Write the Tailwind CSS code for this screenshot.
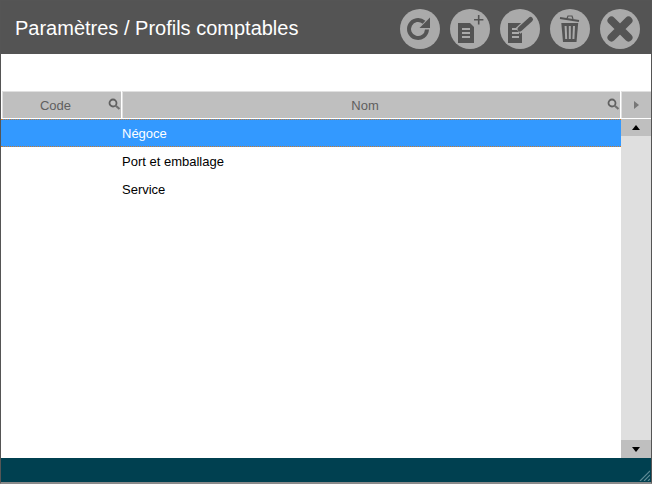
<!DOCTYPE html>
<html lang="fr">
<head>
<meta charset="UTF-8">
<title>Paramètres / Profils comptables</title>
<script src="https://cdn.jsdelivr.net/npm/@tailwindcss/browser@4"></script>
</head>
<body class="bg-white">
<div class="relative w-[652px] h-[484px] flex flex-col border border-[#555] border-b-2 border-b-[#8a8a8a] font-['Liberation_Sans',sans-serif] overflow-hidden">
    <!-- title bar -->
    <div class="h-[53px] shrink-0 bg-[#545454] flex items-center justify-between pl-[14px] pr-[11px]">
        <h1 class="text-[20px] text-white">Paramètres / Profils comptables</h1>
        <div class="flex gap-[10px] mt-[2px]">
            <svg class="w-10 h-10" viewBox="0 0 40 40">
                <circle cx="20" cy="20" r="20" fill="#aaa"/>
                <path d="M27 20.500a9 9 0 1 1-3-7.200" fill="none" stroke="#545454" stroke-width="4"/>
                <path d="M30 8.500v10.500h-10.500z" fill="#545454"/>
            </svg>
            <svg class="w-10 h-10" viewBox="0 0 40 40">
                <circle cx="20" cy="20" r="20" fill="#aaa"/>
                <path d="M8 14h12l4 4v16H8z" fill="#545454"/>
                <path d="M12 20h8M12 24h8M12 28h8" stroke="#aaa" stroke-width="1.800"/>
                <path d="M28.700 6v9.400M24 10.700h9.400" stroke="#545454" stroke-width="1.600"/>
            </svg>
            <svg class="w-10 h-10" viewBox="0 0 40 40">
                <circle cx="20" cy="20" r="20" fill="#aaa"/>
                <path d="M8 14h14v20H8z" fill="#545454"/>
                <path d="M12 20h7M12 24h7M12 28h7" stroke="#aaa" stroke-width="1.800"/>
                <path d="M18 22l12-11" stroke="#aaa" stroke-width="7.500"/>
                <path d="M20 20l10.500-9.500" stroke="#545454" stroke-width="5" stroke-linecap="round"/>
            </svg>
            <svg class="w-10 h-10" viewBox="0 0 40 40">
                <circle cx="20" cy="20" r="20" fill="#aaa"/>
                <path d="M10 9l19 3" stroke="#545454" stroke-width="2"/>
                <path d="M17 9.500l1-2.500h4l1 3" fill="none" stroke="#545454" stroke-width="1.200"/>
                <path d="M11.300 14h16.900l-1.700 19h-13.500z" fill="#545454"/>
                <path d="M15.600 17l.6 13M19.800 17v13M24 17l-.6 13" stroke="#aaa" stroke-width="2"/>
            </svg>
            <svg class="w-10 h-10" viewBox="0 0 40 40">
                <circle cx="20" cy="20" r="20" fill="#aaa"/>
                <path d="M11.500 11.500l17 17M28.500 11.500l-17 17" stroke="#545454" stroke-width="8" stroke-linecap="round"/>
            </svg>
        </div>
    </div>
    <div class="h-[37px] shrink-0"></div>
    <!-- column headers -->
    <div class="h-[27px] shrink-0 flex gap-[1px] text-[13px] text-[#606060] bg-white">
        <div class="relative w-[119px] ml-px border-t border-l border-[#e0e0e0] bg-[#bfbfbf] flex items-center justify-center pr-[13px] pt-[2px]">
            Code
            <svg class="absolute right-0 top-[5px] w-[14px] h-[14px]" viewBox="0 0 14 14"><circle cx="6" cy="6" r="3.500" fill="#c4c4c4" stroke="#606060" stroke-width="1.800"/><path d="M8.500 8.500l4 3.500" stroke="#707070" stroke-width="2.200"/></svg>
        </div>
        <div class="relative w-[498px] border-t border-l border-[#e0e0e0] bg-[#bfbfbf] flex items-center justify-center pr-[13px] pt-[2px]">
            Nom
            <svg class="absolute right-0 top-[5px] w-[14px] h-[14px]" viewBox="0 0 14 14"><circle cx="6" cy="6" r="3.500" fill="#c4c4c4" stroke="#606060" stroke-width="1.800"/><path d="M8.500 8.500l4 3.500" stroke="#707070" stroke-width="2.200"/></svg>
        </div>
        <div class="flex-1 border-t border-l border-[#e0e0e0] bg-[#bfbfbf] flex items-center justify-center">
            <svg class="w-[5px] h-[8px]" viewBox="0 0 5 8"><path d="M0 0l5 4-5 4z" fill="#777"/></svg>
        </div>
    </div>
    <!-- list + scrollbar -->
    <div class="flex-1 flex mt-px min-h-0">
        <div class="flex-1 text-[13px] text-black">
            <div class="h-[28px] bg-[#3399ff] text-white flex items-center pl-[121px] pt-[2px] border-y border-dotted border-[#c77a30]">Négoce</div>
            <div class="h-[28px] flex items-center pl-[121px] pt-[2px]">Port et emballage</div>
            <div class="h-[28px] flex items-center pl-[121px] pt-[2px]">Service</div>
        </div>
        <div class="w-[30px] bg-[#dfdfdf] flex flex-col justify-between">
            <div class="h-[17px] bg-[#bfbfbf] flex items-center justify-center">
                <svg class="w-[8px] h-[5px]" viewBox="0 0 8 5"><path d="M0 5l4-5 4 5z" fill="#000"/></svg>
            </div>
            <div class="h-[18px] bg-[#bfbfbf] flex items-center justify-center">
                <svg class="w-[8px] h-[5px]" viewBox="0 0 8 5"><path d="M0 0l4 5 4-5z" fill="#000"/></svg>
            </div>
        </div>
    </div>
    <!-- status bar -->
    <div class="relative h-[24px] shrink-0 bg-[#004050]">
        <svg class="absolute right-[1px] bottom-[1px] w-[11px] h-[11px]" viewBox="0 0 11 11"><path d="M11 1L1 11M11 5L5 11M11 9L9 11" stroke="#5d8a95" stroke-width="1.200"/></svg>
    </div>
</div>
</body>
</html>
